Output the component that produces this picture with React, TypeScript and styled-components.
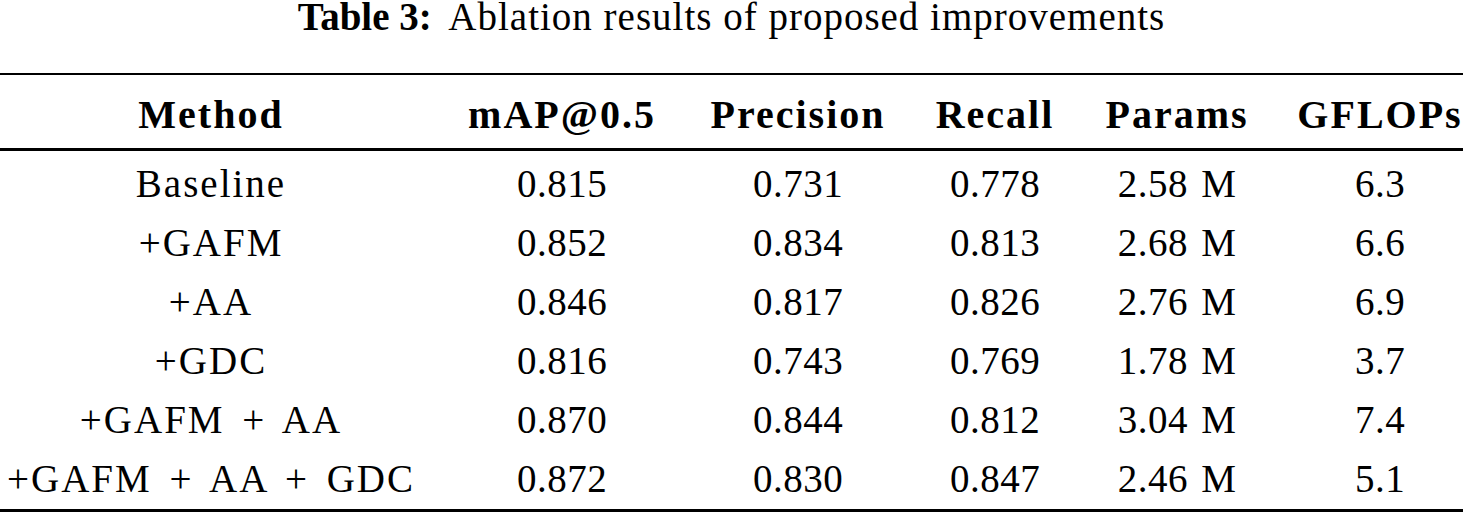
import React from 'react';
import styled, { createGlobalStyle } from 'styled-components';

const GlobalStyle = createGlobalStyle`
  html, body {
    margin: 0;
    padding: 0;
    background: #fff;
  }
  body {
    font-family: "Liberation Serif", "Times New Roman", serif;
    color: #000;
  }
`;

const Figure = styled.div`
  width: 1463px;
  font-size: 39px;
`;

const Caption = styled.div`
  height: 33px;
  line-height: 33px;
  margin-bottom: 40px;
  text-align: center;
  letter-spacing: 1px;
  white-space: nowrap;
`;

const CaptionLabel = styled.span`
  font-weight: 700;
  letter-spacing: 0;
  margin-right: 8px;
`;

const Table = styled.div`
  border-top: 2px solid #000;
  border-bottom: 3px solid #000;
`;

const Head = styled.div`
  padding: 18px 0 11px;
  border-bottom: 3px solid #000;
`;

const Body = styled.div`
  padding: 3px 0 1px;
`;

const Row = styled.div<{ $head?: boolean }>`
  display: grid;
  grid-template-columns: 422px 280px 192px 202px 162px 1fr;
  height: ${(p) => (p.$head ? 44 : 59)}px;
  line-height: ${(p) => (p.$head ? 44 : 59)}px;
  font-weight: ${(p) => (p.$head ? 700 : 400)};
`;

type CellKind = 'head' | 'label' | 'value';

const spacing: Record<CellKind, string> = {
  head: 'letter-spacing: 2px; font-size: 40px;',
  label: 'letter-spacing: 2px; word-spacing: 6px;',
  value: 'letter-spacing: 0.5px; word-spacing: 3px;',
};

const Cell = styled.div<{ $kind: CellKind }>`
  text-align: center;
  white-space: nowrap;
  ${(p) => spacing[p.$kind]}
  &:last-child {
    padding-left: 39px;
  }
`;

const columns = ['Method', 'mAP@0.5', 'Precision', 'Recall', 'Params', 'GFLOPs'];

const rows = [
  ['Baseline', '0.815', '0.731', '0.778', '2.58 M', '6.3'],
  ['+GAFM', '0.852', '0.834', '0.813', '2.68 M', '6.6'],
  ['+AA', '0.846', '0.817', '0.826', '2.76 M', '6.9'],
  ['+GDC', '0.816', '0.743', '0.769', '1.78 M', '3.7'],
  ['+GAFM + AA', '0.870', '0.844', '0.812', '3.04 M', '7.4'],
  ['+GAFM + AA + GDC', '0.872', '0.830', '0.847', '2.46 M', '5.1'],
];

export default function App() {
  return (
    <>
      <GlobalStyle />
      <Figure>
        <Caption>
          <CaptionLabel>Table 3:</CaptionLabel> Ablation results of proposed improvements
        </Caption>
        <Table>
          <Head>
            <Row $head>
              {columns.map((c) => (
                <Cell key={c} $kind="head">{c}</Cell>
              ))}
            </Row>
          </Head>
          <Body>
            {rows.map((r) => (
              <Row key={r[0]}>
                {r.map((v, i) => (
                  <Cell key={i} $kind={i === 0 ? 'label' : 'value'}>{v}</Cell>
                ))}
              </Row>
            ))}
          </Body>
        </Table>
      </Figure>
    </>
  );
}
